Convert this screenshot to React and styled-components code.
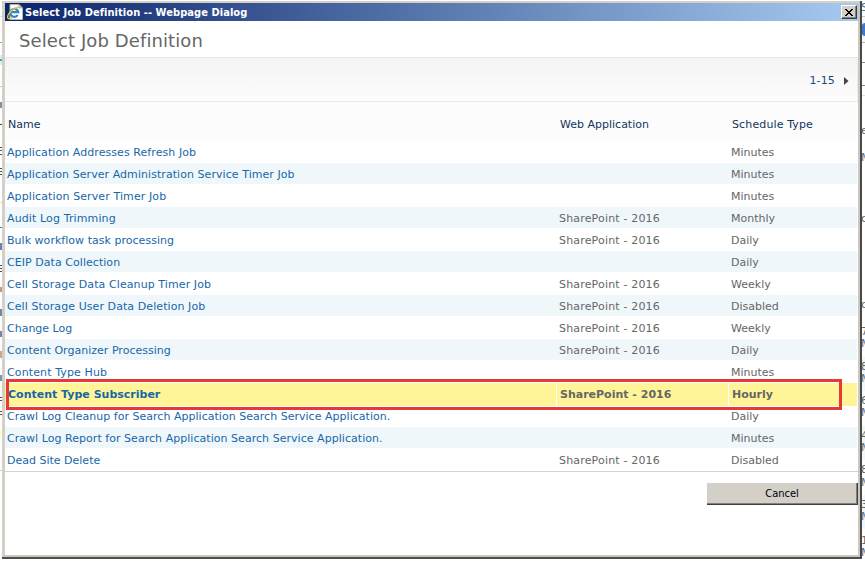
import React from "react";
import styled, { createGlobalStyle } from "styled-components";

const Global = createGlobalStyle`
  * { box-sizing: border-box; }
  body { margin: 0; background: #fff; font-family: "DejaVu Sans", Verdana, sans-serif; font-size: 11px; }
`;
const Screen = styled.div`
  position: relative; width: 865px; height: 562px; overflow: hidden; background: #fff; padding: 1px 0 0 2px;
`;
/* Slivers of the page that lies behind the dialog */
const Glimpse = styled.span`
  position: absolute; left: 862px; top: ${p => p.$y - 7}px; width: 3px; height: 14px; overflow: hidden;
  line-height: 14px; text-indent: -1px; color: ${p => p.$color || "#666"};
`;
const Band = styled.i`
  position: absolute; left: ${p => (p.$left ? 0 : 862)}px; width: ${p => (p.$left ? 2 : 3)}px;
  top: ${p => p.$y}px; height: ${p => p.$h}px; background: ${p => p.$color};
  border-radius: ${p => (p.$round ? "3px 0 0 3px" : 0)};
`;
const Frame = styled.section`
  position: relative; width: 860px; height: 558px;
  border: solid #4a4946; border-width: 0 2px 2px 0; border-bottom-color: #504f4c;
`;
const Dialog = styled.div`
  width: 858px; height: 556px; background: #fff;
  border: solid #d4d0c8; border-width: 2px 2px 2px 3px; border-right-color: #cbc8c1; border-bottom-color: #cbc8c1;
  display: flex; flex-direction: column;
`;
const TitleBar = styled.header`
  height: 18px; display: flex; align-items: center; padding: 0 1px 0 2px;
  background: linear-gradient(90deg, #0a246a, #a6caf0);
  color: #fff; flex: none;
`;
const TitleText = styled.span`
  font: bold 11px/18px "DejaVu Sans Condensed", "DejaVu Sans", sans-serif; letter-spacing: 0.06px;
  margin-left: 2px; padding-top: 1px; flex: 1; white-space: nowrap;
`;
const Close = styled.button`
  width: 16px; height: 14px; padding: 0; background: #d4d0c8; border: 1px solid; border-color: #fff #404040 #404040 #fff;
  box-shadow: inset -1px -1px #808080; display: flex; align-items: center; justify-content: center;
`;
const Heading = styled.h1`
  margin: 0; height: 36px; padding-left: 14px; font-size: 18px; line-height: 40px; font-weight: normal;
  letter-spacing: 0.1px; color: #666; flex: none;
`;
const Pager = styled.div`
  height: 45px; border-top: 1px solid #e8e8e8; border-bottom: 1px solid #ebebeb; border-right: 1px solid #eee;
  background: linear-gradient(#f4f4f4, #fdfdfd);
  display: flex; align-items: center; justify-content: flex-end; padding: 2px 8px 0 0; gap: 9px; color: #204a7a; flex: none;
`;
const Row = styled.div`
  display: grid; grid-template-columns: 551px 171px 128px; column-gap: 1px; height: 21px; margin: 0 1px 1px 0;
  line-height: 23px; color: #666; white-space: nowrap; flex: none;
  font-weight: ${p => (p.$selected ? "bold" : "normal")};
  background: ${p => (p.$striped ? "#f0f7fb" : "transparent")};
`;
const HeadRow = styled(Row)`
  height: 39px; line-height: 46px; background: #fcfcfc; color: #10365c; margin: 0;
`;
const Cell = styled.div`
  padding-left: ${p => (p.$wide ? 3 : 2)}px; letter-spacing: ${p => p.$ls || 0}px;
  background: ${p => (p.$selected ? "#fff598" : "transparent")};
`;
const JobName = styled.span`
  color: #1767a8;
`;
const Marker = styled.div`
  position: absolute; left: 6px; top: 379px; width: 836px; height: 31px; border: 3px solid #e63a3a;
`;
const Footer = styled.footer`
  border-top: 1px solid #d4d4d4; padding-top: 11px; display: flex; justify-content: flex-end;
`;
const Cancel = styled.button`
  width: 151px; height: 22px; padding: 0; background: #d4d0c8; border: solid #404040; border-width: 0 1px 1px 0;
  box-shadow: inset -1px -1px #808080; font: 11px/22px "DejaVu Sans Condensed", sans-serif; color: #000;
`;

const jobs = [
  ["Application Addresses Refresh Job", 0, "Minutes", 0.07],
  ["Application Server Administration Service Timer Job", 0, "Minutes", 0.06],
  ["Application Server Timer Job", 0, "Minutes", 0.1],
  ["Audit Log Trimming", 1, "Monthly", 0.12],
  ["Bulk workflow task processing", 1, "Daily", 0.03],
  ["CEIP Data Collection", 0, "Daily", 0.05],
  ["Cell Storage Data Cleanup Timer Job", 1, "Weekly", 0.09],
  ["Cell Storage User Data Deletion Job", 1, "Disabled", 0.08],
  ["Change Log", 1, "Weekly", 0],
  ["Content Organizer Processing", 1, "Daily", 0.02],
  ["Content Type Hub", 0, "Minutes", 0.12],
  ["Content Type Subscriber", 1, "Hourly", 0],
  ["Crawl Log Cleanup for Search Application Search Service Application.", 0, "Daily", 0.025],
  ["Crawl Log Report for Search Application Search Service Application.", 0, "Minutes", 0.04],
  ["Dead Site Delete", 1, "Disabled", 0],
];

const glimpses = [
  [8, "S", "#2e7096"], [131, "e"], [158, "M", "#567086"], [219, "c"], [305, "c"],
  [332, "7"], [344, "M", "#567086"], [367, "8"], [379, "M", "#567086"], [401, "6"], [413, "M", "#567086"],
  [436, "4"], [448, "M", "#567086"], [470, "8"], [483, "M", "#567086"], [505, "3"], [517, "M", "#567086"],
  [541, "1"], [553, "M", "#567086"],
];

const rightBands = [
  [16, 1, "#c8c8c8"], [17, 25, "#f6f7f9"], [42, 1, "#b8b8b8"], [62, 1, "#888"], [85, 1, "#888"], [95, 1, "#ddd"],
  [357, 34, "#f0f7fb"], [426, 34, "#f0f7fb"], [495, 34, "#f0f7fb"],
];

const leftBands = [
  [16, 1, "#ddd"], [42, 1, "#aaa"], [55, 10, "#d3eff0"], [59, 2, "#6c9ca0"], [86, 1, "#ccc"], [102, 6, "#7f93a8"],
  [124, 1, "#444"], [147, 1, "#555"], [150, 1, "#555"], [154, 1, "#555"], [168, 1, "#555"], [171, 1, "#555"],
  [174, 1, "#555"], [202, 1, "#ddd"], [227, 1, "#4a6a9a"], [243, 7, "#6a82b4"], [265, 1, "#555"], [268, 1, "#555"],
  [271, 1, "#555"], [287, 5, "#b99c8c"], [309, 7, "#7486a0"], [331, 6, "#7486a0"], [351, 7, "#c9a68e"],
  [375, 6, "#7a98b0"], [397, 1, "#555"], [400, 1, "#555"], [411, 1, "#555"], [414, 1, "#555"], [430, 9, "#fdfbd4"],
  [470, 1, "#ccc"],
];

const PageIcon = () => (
  <svg width="16" height="16" viewBox="0 0 16 16">
    <path d="M3 .5h9l3.500 3.500v11.500h-12.500z" fill="#fff" stroke="#b8b8a8" />
    <path d="M12 .5v3.500h3.500z" fill="#c9d8e8" stroke="#7d8793" strokeWidth=".6" />
    <path d="M10.700 11a4 4 0 1 1 .6-2.800H3.500" fill="none" stroke="#2c86cf" strokeWidth="2.200" />
    <path d="M1 14.500C-1 11 7 2.500 12 3.600" fill="none" stroke="#e9c33c" strokeWidth="1.500" />
    <path d="M1 14.500c1 .6 2.500 0 4-1" fill="none" stroke="#e9c33c" strokeWidth="1.300" />
  </svg>
);

export default function App() {
  return (
    <Screen>
      <Global />
      {rightBands.map(([y, h, c]) => <Band key={y} $y={y} $h={h} $color={c} />)}
      {leftBands.map(([y, h, c]) => <Band key={y} $left $y={y} $h={h} $color={c} />)}
      <Band $y={23} $h={13} $color="#3c78c8" $round />
      {glimpses.map(([y, t, c]) => <Glimpse key={y} $y={y} $color={c}>{t}</Glimpse>)}
      <Frame>
        <Dialog>
          <TitleBar>
            <PageIcon />
            <TitleText>Select Job Definition -- Webpage Dialog</TitleText>
            <Close aria-label="Close">
              <svg width="8" height="7" viewBox="0 0 8 7" shapeRendering="crispEdges">
                <path d="M0 0h2v1h1v1h2v-1h1v-1h2v1h-1v1h-1v1h-1v1h1v1h1v1h1v1h-2v-1h-1v-1h-2v1h-1v1h-2v-1h1v-1h1v-1h1v-1h-1v-1h-1v-1h-1z" />
              </svg>
            </Close>
          </TitleBar>
          <Heading>Select Job Definition</Heading>
          <Pager>
            <Cell $ls={0.15}>1-15</Cell>
            <svg width="5" height="8" viewBox="0 0 5 8"><path d="M0 0l4.500 4l-4.500 4z" fill="#444" /></svg>
          </Pager>
          <HeadRow>
            <Cell $wide>Name</Cell><Cell $wide>Web Application</Cell><Cell $wide $ls={0.13}>Schedule Type</Cell>
          </HeadRow>
          {jobs.map(([name, app, type, ls], i) => {
            const sel = i === 11;
            return (
              <Row key={name} $selected={sel} $striped={i % 2 === 1 && !sel}>
                <Cell $wide={sel} $selected={sel} $ls={ls}><JobName>{name}</JobName></Cell>
                <Cell $wide={sel} $selected={sel} $ls={sel ? 0 : 0.17}>{app ? "SharePoint - 2016" : ""}</Cell>
                <Cell $wide={sel} $selected={sel}>{type}</Cell>
              </Row>
            );
          })}
          <Footer><Cancel>Cancel</Cancel></Footer>
        </Dialog>
      </Frame>
      <Marker />
    </Screen>
  );
}
